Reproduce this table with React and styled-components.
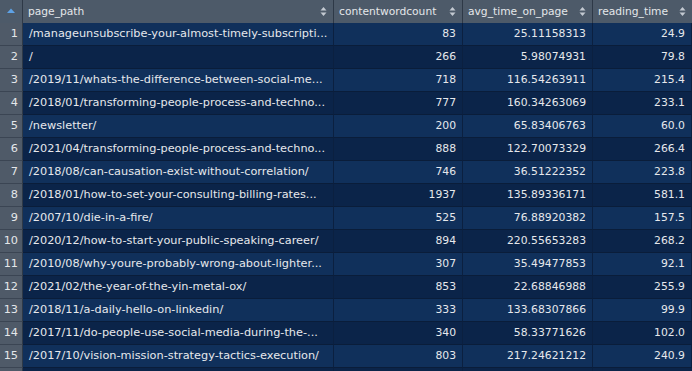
import styled, { createGlobalStyle } from 'styled-components';

// paths are shown as the viewer truncates them
const rows = [
  ["/manageunsubscribe-your-almost-timely-subscripti...", 83, "25.11158313", "24.9"],
  ["/", 266, "5.98074931", "79.8"],
  ["/2019/11/whats-the-difference-between-social-me...", 718, "116.54263911", "215.4"],
  ["/2018/01/transforming-people-process-and-techno...", 777, "160.34263069", "233.1"],
  ["/newsletter/", 200, "65.83406763", "60.0"],
  ["/2021/04/transforming-people-process-and-techno...", 888, "122.70073329", "266.4"],
  ["/2018/08/can-causation-exist-without-correlation/", 746, "36.51222352", "223.8"],
  ["/2018/01/how-to-set-your-consulting-billing-rates...", 1937, "135.89336171", "581.1"],
  ["/2007/10/die-in-a-fire/", 525, "76.88920382", "157.5"],
  ["/2020/12/how-to-start-your-public-speaking-career/", 894, "220.55653283", "268.2"],
  ["/2010/08/why-youre-probably-wrong-about-lighter...", 307, "35.49477853", "92.1"],
  ["/2021/02/the-year-of-the-yin-metal-ox/", 853, "22.68846988", "255.9"],
  ["/2018/11/a-daily-hello-on-linkedin/", 333, "133.68307866", "99.9"],
  ["/2017/11/do-people-use-social-media-during-the-...", 340, "58.33771626", "102.0"],
  ["/2017/10/vision-mission-strategy-tactics-execution/", 803, "217.24621212", "240.9"],
];

const columns = ["page_path", "contentwordcount", "avg_time_on_page", "reading_time"];

const GlobalStyle = createGlobalStyle`
  html, body {
    margin: 0;
    padding: 0;
    background: #0c2448;
    overflow: hidden;
  }
  body {
    font-family: "DejaVu Sans", Verdana, sans-serif;
  }
`;

const Viewer = styled.div`
  width: 692px;
  height: 371px;
  overflow: hidden;
  background: #0c2448;
`;

const Grid = styled.div`
  display: grid;
  grid-template-columns: 23px 311px 129px 130px 99px;
  grid-auto-rows: 23px;
`;

const HeadCell = styled.div`
  height: 24px;
  box-sizing: border-box;
  background: #4d5a69;
  border-right: 1px solid #2e3947;
  border-bottom: 1px solid #29333f;
  color: #e4e7ea;
  font-size: 10.7px;
  display: flex;
  align-items: center;
  justify-content: ${(p) => (p.$corner ? 'center' : 'space-between')};
  padding: ${(p) => (p.$corner ? '0 0 2px' : '0 6px 1px 5px')};
  white-space: nowrap;
  &:nth-child(5) {
    border-right: none;
  }
`;

const SortIcon = styled.svg`
  flex: none;
`;

const IndexCell = styled.div`
  box-sizing: border-box;
  background: #4f5a68;
  border-right: 1px solid #2e3947;
  border-bottom: 1px solid #3b4553;
  color: #e4e7ea;
  font-size: 11.3px;
  display: flex;
  align-items: center;
  justify-content: flex-end;
  padding: 0 4px 1px 0;
`;

const Cell = styled.div`
  box-sizing: border-box;
  background: ${(p) => (p.$odd ? '#10305b' : '#0b2449')};
  border-right: 1px solid #0b2040;
  border-bottom: 1px solid #0a1d3a;
  color: #e6e8ec;
  font-size: ${(p) => (p.$path ? '11.3px' : '10.8px')};
  line-height: 22px;
  padding: ${(p) => (p.$path ? '0 2px 0 6px' : '0 6px')};
  text-align: ${(p) => (p.$path ? 'left' : 'right')};
  white-space: nowrap;
  overflow: hidden;
  &:last-child {
    border-right: none;
  }
`;

function UpArrow() {
  return (
    <SortIcon width="10" height="8" viewBox="0 0 10 8">
      <path d="M1 6 L5 1.5 L9 6 Z" fill="#5ea2e6" />
    </SortIcon>
  );
}

function SortArrows() {
  return (
    <SortIcon width="7" height="11" viewBox="0 0 7 11">
      <path d="M0.5 4.5 L3.5 1 L6.5 4.5 Z" fill="#c3c9d1" />
      <path d="M0.5 6.5 L3.5 10 L6.5 6.5 Z" fill="#c3c9d1" />
    </SortIcon>
  );
}

function Row({ index, data }) {
  const odd = index % 2 === 1;
  return (
    <>
      <IndexCell>{data ? index : null}</IndexCell>
      <Cell $odd={odd} $path>{data?.[0]}</Cell>
      <Cell $odd={odd}>{data?.[1]}</Cell>
      <Cell $odd={odd}>{data?.[2]}</Cell>
      <Cell $odd={odd}>{data?.[3]}</Cell>
    </>
  );
}

export default function App() {
  return (
    <Viewer>
      <GlobalStyle />
      <Grid>
        <HeadCell $corner>
          <UpArrow />
        </HeadCell>
        {columns.map((name) => (
          <HeadCell key={name}>
            <span>{name}</span>
            <SortArrows />
          </HeadCell>
        ))}
        {rows.map((r, i) => (
          <Row key={i} index={i + 1} data={r} />
        ))}
        {/* next row peeks in below the fold */}
        <Row index={rows.length + 1} />
      </Grid>
    </Viewer>
  );
}
